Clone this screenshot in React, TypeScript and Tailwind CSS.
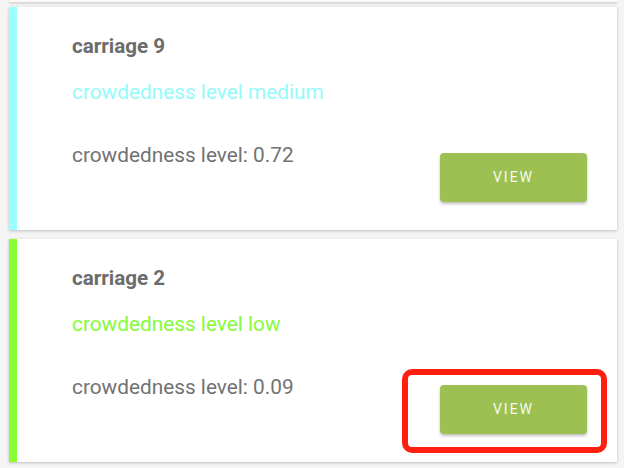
import React from 'react';

type Carriage = {
  name: string;
  level: string;
  value: string;
  stripe: string;
  text: string;
};

const carriages: Carriage[] = [
  {
    name: 'carriage 9',
    level: 'crowdedness level medium',
    value: '0.72',
    stripe: 'bg-[#99ffff]',
    text: 'text-[#94fbfb]',
  },
  {
    name: 'carriage 2',
    level: 'crowdedness level low',
    value: '0.09',
    stripe: 'bg-[#88ff33]',
    text: 'text-[#84fb3a]',
  },
];

const CarriageCard: React.FC<{ c: Carriage }> = ({ c }) => (
  <div className="flex h-[223px] bg-white shadow-[0_1px_3px_rgba(0,0,0,0.22)]">
    <div className={`w-[8px] shrink-0 ${c.stripe}`} />
    <div className="flex-1 flex flex-col pl-[55px] pr-[30px] pt-[27px]">
      <div className="text-[20.6px] leading-[24px] font-bold text-[#6b6b6b]">{c.name}</div>
      <div className={`mt-[22px] text-[20.8px] leading-[24px] ${c.text}`}>{c.level}</div>
      <div className="mt-[39px] flex items-start justify-between">
        <div className="text-[20.8px] leading-[24px] text-[#727272]">
          crowdedness level: {c.value}
        </div>
        <button className="mt-[10px] w-[147px] h-[49px] rounded-[4px] bg-[#9cc152] text-[#f7f9f0] text-[14px] tracking-[2px] shadow-[0_2px_3px_rgba(0,0,0,0.25)]">
          VIEW
        </button>
      </div>
    </div>
  </div>
);

const App: React.FC = () => {
  return (
    <div
      className="relative w-[624px] h-[468px] overflow-hidden bg-[#f5f5f5] pl-[9px] pr-[7px]"
      style={{ fontFamily: 'Roboto, "Noto Sans", sans-serif' }}
    >
      {/* bottom edge of the previous card */}
      <div className="h-[2px] bg-[#fafafa] shadow-[0_1px_3px_rgba(0,0,0,0.25)]" />
      <div className="mt-[5px] flex flex-col gap-[9px]">
        {carriages.map((c) => (
          <CarriageCard key={c.name} c={c} />
        ))}
      </div>
      {/* highlight annotation */}
      <div className="absolute left-[402px] top-[369px] w-[205px] h-[84px] rounded-[10px] border-[6px] border-[#ff1f10]" />
    </div>
  );
};

export default App;
